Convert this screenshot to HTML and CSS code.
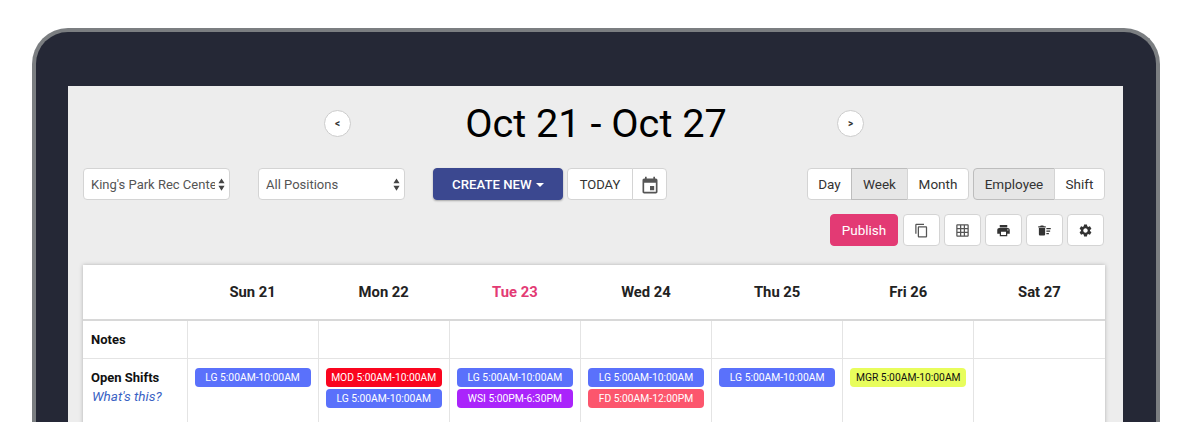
FILE: index.html
```html
<!DOCTYPE html>
<html lang="en">
<head>
  <meta charset="UTF-8">
  <title>Schedule</title>
  <link rel="stylesheet" href="styles.css">
</head>
<body>
  <div class="device">
    <div class="screen">
      <!-- Date navigation -->
      <div class="date-nav">
        <button class="btn-round">&lt;</button>
        <h1 class="date-title">Oct 21 - Oct 27</h1>
        <button class="btn-round">&gt;</button>
      </div>

      <!-- Filters and view switches -->
      <div class="toolbar">
        <div class="toolbar-left">
          <div class="select-box">
            <span class="select-text">King's Park Rec Center</span>
            <svg class="select-arrows" viewBox="0 0 8 14"><path d="M4 0l3.5 5.5h-7zM4 14L.5 8.500h7z"/></svg>
          </div>
          <div class="select-box">
            <span class="select-text">All Positions</span>
            <svg class="select-arrows" viewBox="0 0 8 14"><path d="M4 0l3.5 5.5h-7zM4 14L.5 8.500h7z"/></svg>
          </div>
          <button class="btn btn-create">CREATE NEW <span class="caret"></span></button>
          <div class="btn-group today-group">
            <button class="btn btn-today">TODAY</button>
            <button class="btn btn-cal">
              <svg class="icon icon-cal" viewBox="0 0 24 24"><path d="M17 12h-5v5h5v-5zM16 1v2H8V1H6v2H5c-1.110 0-1.990.9-1.990 2L3 19c0 1.100.89 2 2 2h14c1.100 0 2-.9 2-2V5c0-1.100-.9-2-2-2h-1V1h-2zm3 18H5V8h14v11z"/></svg>
            </button>
          </div>
        </div>
        <div class="toolbar-right">
          <div class="btn-group">
            <button class="btn btn-day">Day</button>
            <button class="btn btn-week active">Week</button>
            <button class="btn btn-month">Month</button>
          </div>
          <div class="btn-group">
            <button class="btn btn-employee active">Employee</button>
            <button class="btn btn-shift">Shift</button>
          </div>
        </div>
      </div>

      <!-- Actions -->
      <div class="actions">
        <button class="btn btn-publish">Publish</button>
        <button class="btn btn-icon">
          <svg class="icon icon-light" viewBox="0 0 24 24"><path d="M16 1H4c-1.100 0-2 .9-2 2v14h2V3h12V1zm3 4H8c-1.100 0-2 .9-2 2v14c0 1.100.9 2 2 2h11c1.100 0 2-.9 2-2V7c0-1.100-.9-2-2-2zm0 16H8V7h11v14z"/></svg>
        </button>
        <button class="btn btn-icon">
          <svg class="icon icon-light" viewBox="0 0 24 24"><path d="M20 2H4c-1.100 0-2 .9-2 2v16c0 1.100.9 2 2 2h16c1.100 0 2-.9 2-2V4c0-1.100-.9-2-2-2zM8 20H4v-4h4v4zm0-6H4v-4h4v4zm0-6H4V4h4v4zm6 12h-4v-4h4v4zm0-6h-4v-4h4v4zm0-6h-4V4h4v4zm6 12h-4v-4h4v4zm0-6h-4v-4h4v4zm0-6h-4V4h4v4z"/></svg>
        </button>
        <button class="btn btn-icon">
          <svg class="icon" viewBox="0 0 24 24"><path d="M19 8H5c-1.660 0-3 1.340-3 3v6h4v4h12v-4h4v-6c0-1.660-1.340-3-3-3zm-3 11H8v-5h8v5zm3-7c-.55 0-1-.45-1-1s.45-1 1-1 1 .45 1 1-.45 1-1 1zm-1-9H6v4h12V3z"/></svg>
        </button>
        <button class="btn btn-icon">
          <svg class="icon" viewBox="0 0 24 24"><path d="M15 16h4v2h-4zm0-8h7v2h-7zm0 4h6v2h-6zM3 18c0 1.100.9 2 2 2h6c1.100 0 2-.9 2-2V8H3v10zM14 5h-3l-1-1H6L5 5H2v2h12z"/></svg>
        </button>
        <button class="btn btn-icon">
          <svg class="icon" viewBox="0 0 24 24"><path d="M19.140 12.940c.04-.3.06-.61.06-.94 0-.32-.02-.64-.07-.94l2.030-1.580c.18-.14.23-.41.12-.61l-1.920-3.320c-.12-.22-.37-.29-.59-.22l-2.390.96c-.5-.38-1.030-.7-1.620-.94l-.36-2.540c-.04-.24-.24-.41-.48-.41h-3.840c-.24 0-.43.17-.47.41l-.36 2.540c-.59.24-1.130.57-1.620.94l-2.390-.96c-.22-.08-.47 0-.59.22L2.740 8.870c-.12.21-.08.47.12.61l2.030 1.580c-.05.3-.09.63-.09.94s.02.64.07.94l-2.030 1.580c-.18.14-.23.41-.12.61l1.920 3.320c.12.22.37.29.59.22l2.390-.96c.5.38 1.030.7 1.620.94l.36 2.540c.05.24.24.41.48.41h3.840c.24 0 .44-.17.47-.41l.36-2.540c.59-.24 1.130-.56 1.620-.94l2.390.96c.22.08.47 0 .59-.22l1.920-3.320c.12-.22.07-.47-.12-.61l-2.010-1.580zM12 15.600c-1.980 0-3.600-1.620-3.600-3.600s1.620-3.600 3.600-3.600 3.600 1.620 3.600 3.600-1.620 3.600-3.600 3.600z"/></svg>
        </button>
      </div>

      <!-- Schedule -->
      <table class="schedule">
        <thead>
          <tr>
            <th class="col-label"></th>
            <th>Sun 21</th>
            <th>Mon 22</th>
            <th class="today">Tue 23</th>
            <th>Wed 24</th>
            <th>Thu 25</th>
            <th>Fri 26</th>
            <th>Sat 27</th>
          </tr>
        </thead>
        <tbody>
          <tr class="row-notes">
            <td class="row-label">Notes</td>
            <td></td><td></td><td></td><td></td><td></td><td></td><td></td>
          </tr>
          <tr class="row-shifts">
            <td class="row-label">Open Shifts<a class="help-link">What's this?</a></td>
            <td><div class="shift shift-lg">LG 5:00AM-10:00AM</div></td>
            <td>
              <div class="shift shift-mod">MOD 5:00AM-10:00AM</div>
              <div class="shift shift-lg">LG 5:00AM-10:00AM</div>
            </td>
            <td>
              <div class="shift shift-lg">LG 5:00AM-10:00AM</div>
              <div class="shift shift-wsi">WSI 5:00PM-6:30PM</div>
            </td>
            <td>
              <div class="shift shift-lg">LG 5:00AM-10:00AM</div>
              <div class="shift shift-fd">FD 5:00AM-12:00PM</div>
            </td>
            <td><div class="shift shift-lg">LG 5:00AM-10:00AM</div></td>
            <td><div class="shift shift-mgr">MGR 5:00AM-10:00AM</div></td>
            <td></td>
          </tr>
        </tbody>
      </table>
    </div>
  </div>
</body>
</html>
```

FILE: styles.css
```css
/* General */
html, body {
  height: 422px;
  margin: 0;
  overflow: hidden;
  background-color: #fff;
}
body {
  font-family: Roboto, "Liberation Sans", sans-serif;
  color: #333;
}
.device {
  box-sizing: border-box;
  display: flex;
  width: 1128px;
  height: 394px;
  margin: 28px 0 0 32px;
  padding: 54px 33px 0 32px;
  background-color: #252836;
  border: 4px solid #7b7e81;
  border-bottom: none;
  border-radius: 36px 36px 0 0;
}
.screen {
  flex: 1;
  box-sizing: border-box;
  padding: 24px 18px 0 15px;
  background-color: #ededed;
}

/* Date navigation */
.date-nav {
  display: flex;
  justify-content: center;
  align-items: center;
  height: 27px;
}
.date-title {
  width: 486px;
  margin: 0;
  padding-left: 4px;
  box-sizing: border-box;
  font-size: 39.700px;
  font-weight: 400;
  line-height: 27px;
  text-align: center;
  color: #000;
}
.btn-round {
  box-sizing: border-box;
  width: 27px;
  height: 27px;
  padding: 0;
  font-family: inherit;
  font-size: 10px;
  font-weight: 700;
  color: #333;
  background-color: #fff;
  border: 1px solid #ccc;
  border-radius: 50%;
}

/* Buttons */
.btn {
  box-sizing: border-box;
  height: 32px;
  padding: 0;
  font-family: inherit;
  font-size: 13.500px;
  color: #333;
  background-color: #fff;
  border: 1px solid #d4d4d4;
  border-radius: 4px;
}
.btn-group {
  display: flex;
}
.btn-group .btn {
  border-radius: 0;
  margin-left: -1px;
}
.btn-group .btn:first-child {
  margin-left: 0;
  border-radius: 4px 0 0 4px;
}
.btn-group .btn:last-child {
  border-radius: 0 4px 4px 0;
}
.btn.active {
  background-color: #e6e6e6;
  border-color: #bdbdbd;
}

/* Toolbar */
.toolbar {
  display: flex;
  justify-content: space-between;
  margin-top: 31px;
}
.toolbar-left, .toolbar-right {
  display: flex;
}
.toolbar-right {
  gap: 4px;
}
.select-box {
  box-sizing: border-box;
  display: flex;
  align-items: center;
  width: 147px;
  height: 32px;
  margin-right: 28px;
  padding: 0 4px 0 7px;
  font-size: 13px;
  color: #555;
  background-color: #fff;
  border: 1px solid #d4d4d4;
  border-radius: 4px;
}
.select-text {
  flex: 1;
  overflow: hidden;
  white-space: nowrap;
}
.select-arrows {
  width: 7px;
  height: 13px;
  margin-left: 3px;
  fill: #444;
}
.btn-create {
  width: 130px;
  color: #fff;
  background-color: #3b4890;
  border-color: #3b4890;
  font-weight: 500;
  font-size: 13.200px;
  box-shadow: 0 1px 2px rgba(0, 0, 0, 0.3);
}
.caret {
  display: inline-block;
  margin-left: 1px;
  vertical-align: middle;
  border-top: 4px solid #fff;
  border-left: 4px solid transparent;
  border-right: 4px solid transparent;
}
.today-group {
  margin-left: 4px;
}
.btn-today {
  width: 66px;
  font-size: 13px;
}
.btn-cal {
  width: 35px;
}
.btn-day { width: 45px; }
.btn-week { width: 57px; }
.btn-month { width: 62px; }
.btn-employee { width: 82px; }
.btn-shift { width: 51px; }

/* Actions */
.actions {
  display: flex;
  justify-content: flex-end;
  gap: 4px;
  margin-top: 14px;
  padding-right: 1px;
}
.btn-publish {
  width: 68px;
  margin-right: 1px;
  color: #fff;
  background-color: #e33a74;
  border-color: #e33a74;
  font-size: 13.500px;
  font-weight: 400;
}
.btn-icon {
  display: flex;
  align-items: center;
  justify-content: center;
  width: 37px;
}
.icon {
  display: block;
  width: 15px;
  height: 15px;
  fill: #333;
}
.icon-light {
  fill: #555;
}
.icon-cal {
  width: 20px;
  height: 20px;
  margin: 4px auto 0;
  fill: #555;
}

/* Schedule table */
.schedule {
  width: 1022px;
  margin-top: 19px;
  table-layout: fixed;
  border-collapse: collapse;
  background-color: #fff;
  box-shadow: 0 0 4px rgba(0, 0, 0, 0.25);
}
.schedule th {
  height: 54px;
  padding: 0;
  font-size: 14.800px;
  font-weight: 700;
  color: #222;
  border-bottom: 2px solid #d8d8d8;
}
.schedule th.col-label {
  width: 104px;
}
.schedule th.today {
  color: #e33a74;
}
.schedule td {
  padding: 0 7px;
  border: 1px solid #e4e4e4;
  vertical-align: top;
}
.schedule tr > td:first-child {
  border-left: none;
}
.schedule tr > td:last-child {
  border-right: none;
}
.schedule .row-notes td {
  height: 37px;
}
.schedule .row-shifts td {
  height: 62px;
  padding-top: 9px;
  border-bottom: none;
}
.schedule td.row-label {
  padding-left: 8px;
  font-size: 13px;
  font-weight: 700;
  line-height: 19px;
  color: #111;
}
.schedule .row-notes .row-label {
  vertical-align: middle;
}
.help-link {
  display: block;
  padding-left: 1px;
  font-size: 13.500px;
  font-weight: 400;
  font-style: italic;
  color: #3a62c4;
}

/* Shift chips */
.shift {
  height: 19px;
  margin-bottom: 2px;
  font-size: 10.300px;
  line-height: 19px;
  text-align: center;
  white-space: nowrap;
  color: #fff;
  border-radius: 4px;
}
.shift-lg { background-color: #5a71fb; }
.shift-mod { background-color: #fa051f; }
.shift-wsi { background-color: #aa24fb; }
.shift-fd { background-color: #fc566d; }
.shift-mgr { background-color: #e8fd5c; color: #111; }
```
